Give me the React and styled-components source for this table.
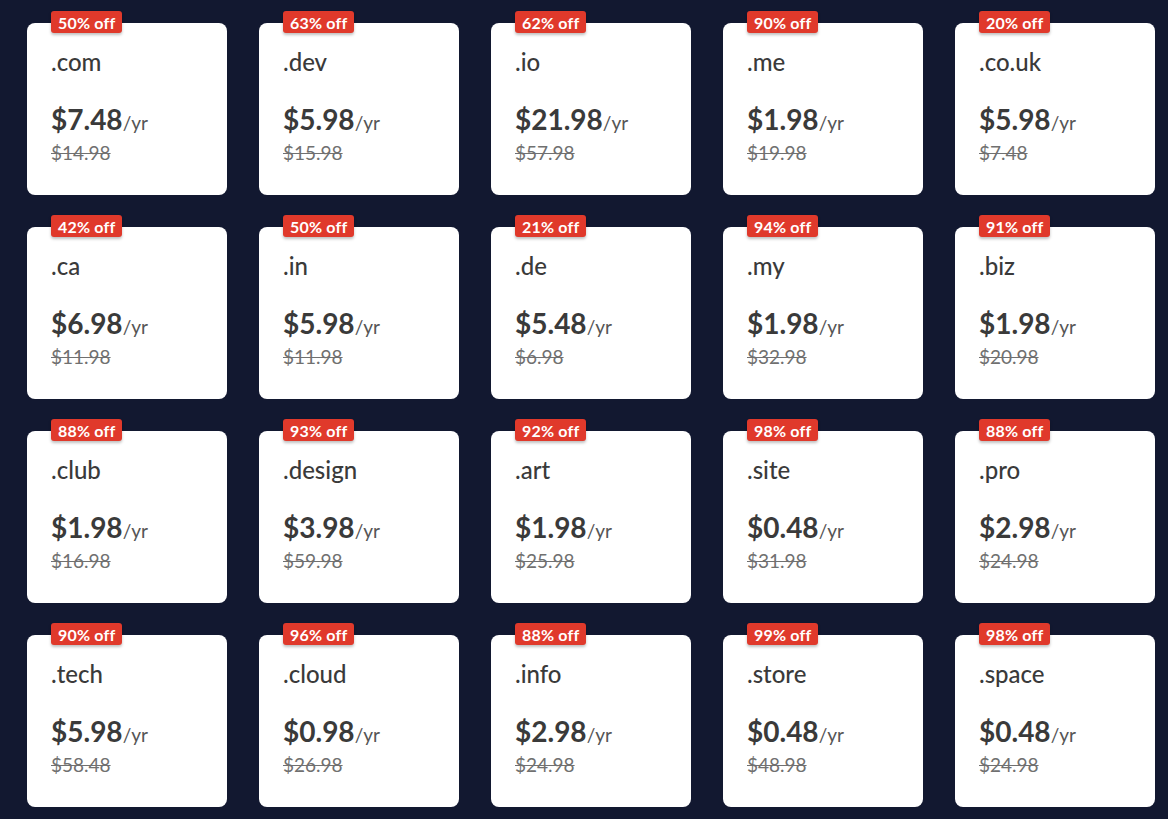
import React from 'react';
import styled, { createGlobalStyle } from 'styled-components';

const Global = createGlobalStyle`
  html, body {
    margin: 0;
    background: #121830;
    font-family: Lato, "Open Sans", sans-serif;
  }
`;

const Page = styled.div`
  min-height: 819px;
  box-sizing: border-box;
  padding: 23px 0 0 27px;
  background: #121830;
`;

const Grid = styled.div`
  display: grid;
  grid-template-columns: repeat(5, 200px);
  grid-auto-rows: 172px;
  column-gap: 32px;
  row-gap: 32px;
`;

const Card = styled.div`
  position: relative;
  background: #fff;
  border-radius: 8px;
  padding: 25px 24px 0;
  color: #3a3a3a;
`;

const Badge = styled.span`
  position: absolute;
  top: -12px;
  left: 24px;
  height: 22px;
  padding: 0 7px;
  display: flex;
  align-items: center;
  background: #e0392b;
  color: #fff;
  font-weight: 700;
  font-size: 16px;
  letter-spacing: 0.2px;
  border-radius: 3px;
  box-shadow: 0 2px 3px rgba(0, 0, 0, 0.25);
`;

const Tld = styled.div`
  font-size: 24px;
  font-weight: 500;
  line-height: 28px;
  color: #3a3a3a;
`;

const Price = styled.div`
  margin-top: 27px;
  display: flex;
  align-items: baseline;
  line-height: 32px;
`;

const Amount = styled.span`
  font-size: 28px;
  font-weight: 700;
  color: #3a3a3a;
`;

const Per = styled.span`
  font-size: 19px;
  color: #555;
`;

const Old = styled.div`
  margin-top: 2px;
  font-size: 19px;
  line-height: 24px;
  color: #707070;
  text-decoration: line-through;
`;

const domains = [
  ['50% off', '.com', '$7.48', '$14.98'],
  ['63% off', '.dev', '$5.98', '$15.98'],
  ['62% off', '.io', '$21.98', '$57.98'],
  ['90% off', '.me', '$1.98', '$19.98'],
  ['20% off', '.co.uk', '$5.98', '$7.48'],
  ['42% off', '.ca', '$6.98', '$11.98'],
  ['50% off', '.in', '$5.98', '$11.98'],
  ['21% off', '.de', '$5.48', '$6.98'],
  ['94% off', '.my', '$1.98', '$32.98'],
  ['91% off', '.biz', '$1.98', '$20.98'],
  ['88% off', '.club', '$1.98', '$16.98'],
  ['93% off', '.design', '$3.98', '$59.98'],
  ['92% off', '.art', '$1.98', '$25.98'],
  ['98% off', '.site', '$0.48', '$31.98'],
  ['88% off', '.pro', '$2.98', '$24.98'],
  ['90% off', '.tech', '$5.98', '$58.48'],
  ['96% off', '.cloud', '$0.98', '$26.98'],
  ['88% off', '.info', '$2.98', '$24.98'],
  ['99% off', '.store', '$0.48', '$48.98'],
  ['98% off', '.space', '$0.48', '$24.98'],
];

export default function App() {
  return (
    <Page>
      <Global />
      <Grid>
        {domains.map(([off, tld, now, was]) => (
          <Card key={tld}>
            <Badge>{off}</Badge>
            <Tld>{tld}</Tld>
            <Price>
              <Amount>{now}</Amount>
              <Per>/yr</Per>
            </Price>
            <Old>{was}</Old>
          </Card>
        ))}
      </Grid>
    </Page>
  );
}
